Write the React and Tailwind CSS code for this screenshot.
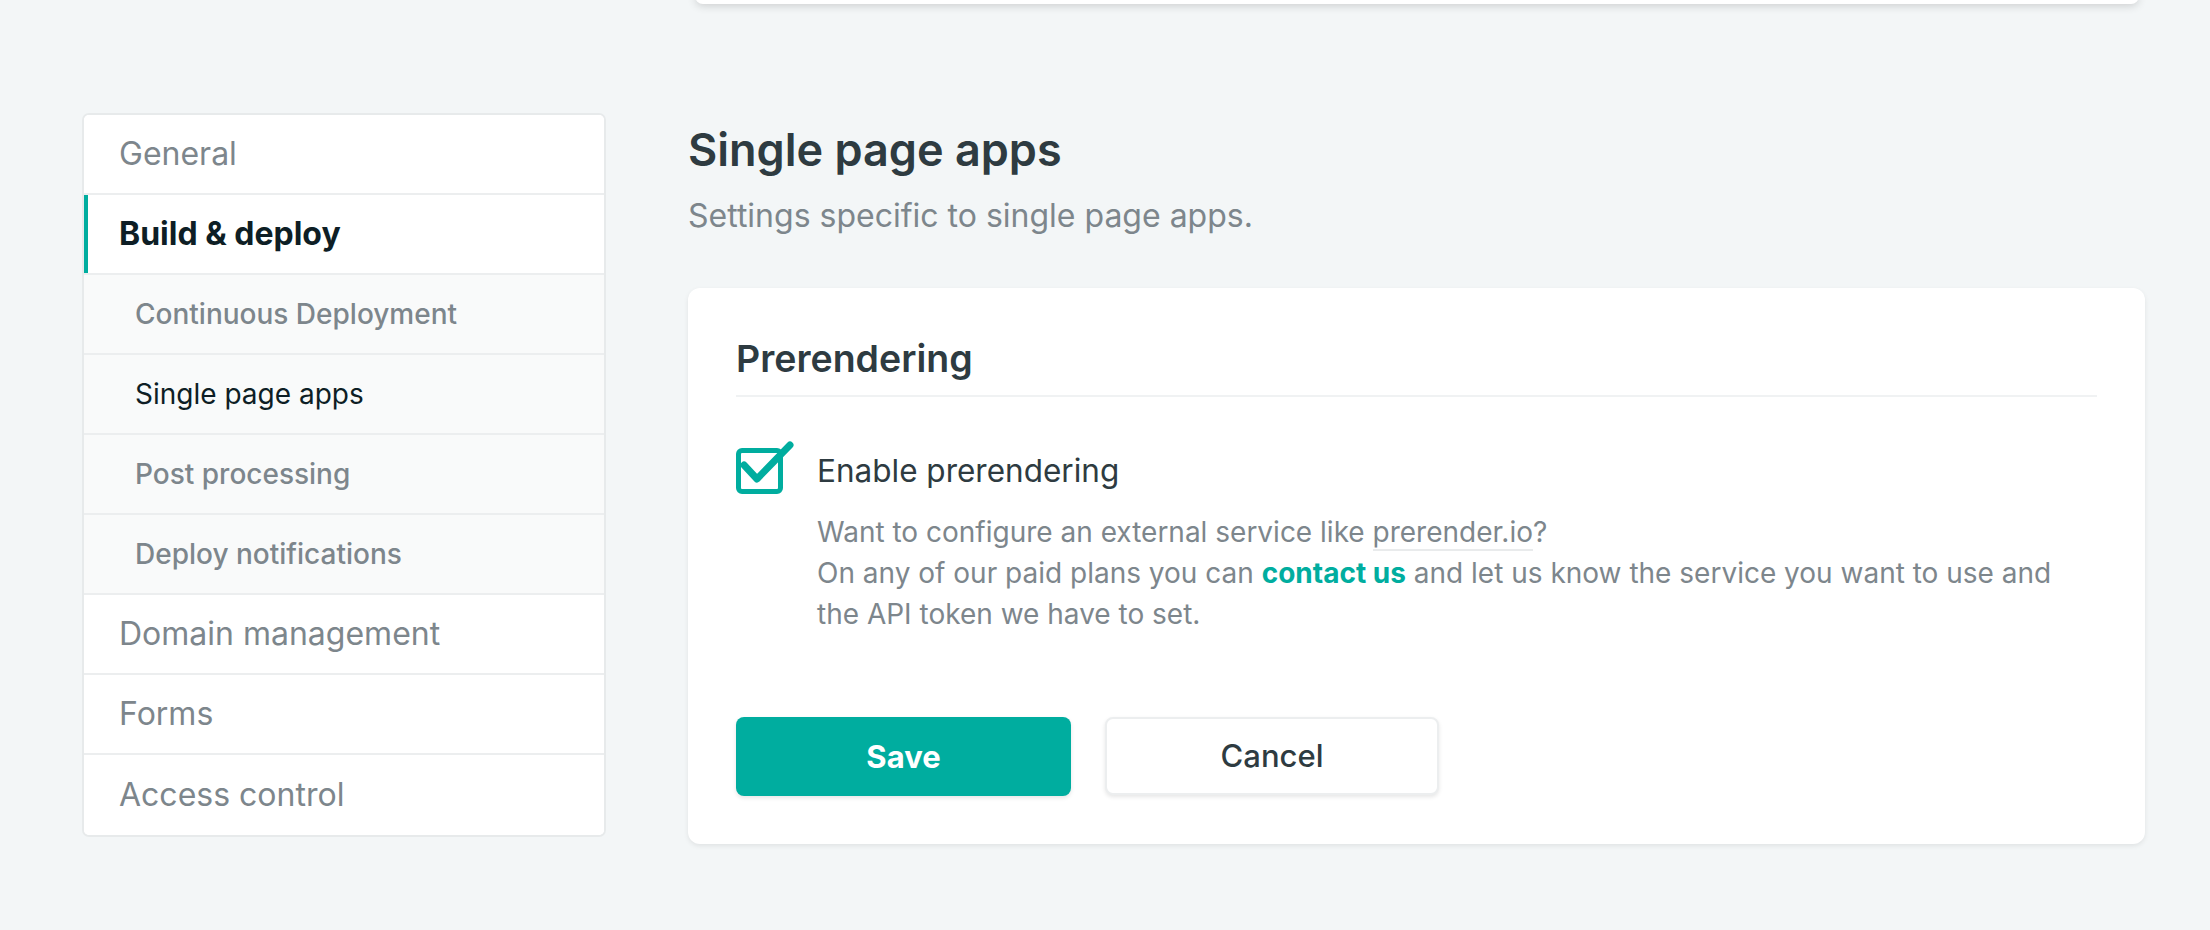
import React from "react";

const TEAL = "#00ad9f";

const navItems = [
    { label: "General", level: 0 },
    { label: "Build & deploy", level: 0, active: true },
    { label: "Continuous Deployment", level: 1 },
    { label: "Single page apps", level: 1, current: true },
    { label: "Post processing", level: 1 },
    { label: "Deploy notifications", level: 1 },
    { label: "Domain management", level: 0 },
    { label: "Forms", level: 0 },
    { label: "Access control", level: 0 },
];

function NavRow({ item }) {
    if (item.level === 1) {
        return (
            <div
                className={
                    "h-[80px] flex items-center pl-[51px] bg-[#f9fafa] text-[28px] " +
                    (item.current
                        ? "text-[#0e1e25] font-normal"
                        : "text-[#7d868c] font-medium")
                }
            >
                {item.label}
            </div>
        );
    }
    return (
        <div
            className={
                "h-[80px] flex items-center pl-[35px] bg-white text-[32px] " +
                (item.active
                    ? "font-bold text-[#0e1e25] shadow-[inset_4px_0_0_#00ad9f]"
                    : "text-[#7d868c]")
            }
        >
            {item.label}
        </div>
    );
}

function Checkbox() {
    return (
        <div className="relative w-[47px] h-[46px] shrink-0">
            <div className="w-full h-full border-[5px] border-[#00ad9f] rounded-[6px] bg-white" />
            <svg
                className="absolute left-0 top-[-10px]"
                width="62"
                height="57"
                viewBox="0 -10 62 57"
                fill="none"
            >
                <path
                    d="M8 17 L21 31 L54 -3"
                    stroke={TEAL}
                    strokeWidth="7"
                    strokeLinecap="round"
                    strokeLinejoin="round"
                />
            </svg>
        </div>
    );
}

export default function App() {
    return (
        <div
            className="flow-root min-h-screen bg-[#f3f6f7]"
            style={{ fontFamily: "Inter, 'Noto Sans', sans-serif" }}
        >
            {/* bottom edge of the card above, scrolled out of view */}
            <div className="ml-[695px] w-[1444px] h-[10px] -mt-[6px] bg-white rounded-b-[8px] shadow-[0_2px_8px_rgba(0,0,0,0.16)]" />

            <div className="flex items-start pl-[82px] pt-[109px] gap-[82px]">
                <nav className="w-[524px] bg-white border-2 border-[#e7eaeb] rounded-[7px] overflow-hidden divide-y-2 divide-[#eceeef]">
                    {navItems.map((item) => (
                        <NavRow key={item.label} item={item} />
                    ))}
                </nav>

                <main className="w-[1457px]">
                    <h1 className="mt-[11px] text-[45px] leading-[52px] font-semibold text-[#2e3b41]">
                        Single page apps
                    </h1>
                    <p className="mt-[20px] text-[32px] leading-[40px] text-[#7d868c]">
                        Settings specific to single page apps.
                    </p>

                    <section className="mt-[52px] bg-white rounded-[12px] shadow-[0_2px_5px_rgba(0,0,0,0.08)] px-[48px] pt-[48px] pb-[48px]">
                        <h2 className="text-[37.5px] leading-[46px] font-semibold text-[#2e3b41] pb-[13px] border-b-2 border-[#f0f2f3]">
                            Prerendering
                        </h2>

                        <div className="mt-[50px] flex items-center gap-[34px]">
                            <Checkbox />
                            <span className="text-[31.5px] text-[#2e3b41]">
                                Enable prerendering
                            </span>
                        </div>

                        <div className="mt-[18px] pl-[81px] text-[28px] leading-[41px] text-[#7d868c]">
                            <p>
                                Want to configure an external service like{" "}
                                <span className="border-b-2 border-[#e9ebec]">
                                    prerender.io
                                </span>
                                ?
                            </p>
                            <p>
                                On any of our paid plans you can{" "}
                                <a className="font-bold text-[#00ad9f]">
                                    contact us
                                </a>{" "}
                                and let us know the service you want to use and
                                <br />
                                the API token we have to set.
                            </p>
                        </div>

                        <div className="mt-[82px] flex gap-[34px]">
                            <button className="w-[335px] h-[79px] rounded-[8px] bg-[#00ad9f] text-white text-[31px] font-bold shadow-[0_2px_4px_rgba(0,0,0,0.1)]">
                                Save
                            </button>
                            <button className="w-[334px] h-[78px] rounded-[8px] bg-white border-2 border-[#eceeef] text-[#2e3b41] text-[31px] font-medium shadow-[0_2px_4px_rgba(0,0,0,0.1)]">
                                Cancel
                            </button>
                        </div>
                    </section>
                </main>
            </div>
        </div>
    );
}
